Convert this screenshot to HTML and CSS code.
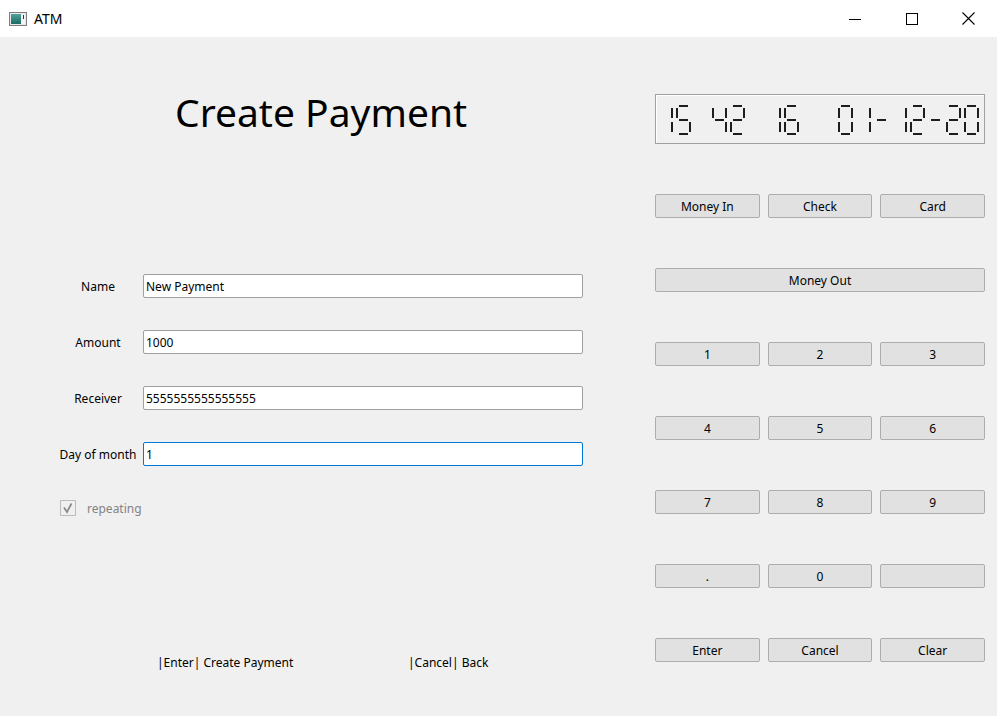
FILE: index.html
```html
<!DOCTYPE html>
<html lang="en">
<head>
<meta charset="utf-8">
<title>ATM</title>
<link rel="stylesheet" href="styles.css">
</head>
<body>
<div class="window">
  <div class="titlebar">
    <svg class="app-icon" viewBox="0 0 18 14" width="18" height="14">
      <defs>
        <linearGradient id="ig" x1="0" y1="0" x2="0" y2="1">
          <stop offset="0" stop-color="#4fa39a"/>
          <stop offset="1" stop-color="#1d6b63"/>
        </linearGradient>
      </defs>
      <rect x="0.5" y="0.5" width="17" height="13" fill="#e8e8e8" stroke="#7d7d7d"/>
      <rect x="2" y="2" width="10" height="10" fill="url(#ig)"/>
      <rect x="12" y="2" width="4" height="10" fill="#f4f4f4"/>
      <rect x="14" y="3" width="1" height="4" fill="#333"/>
    </svg>
    <span class="title">ATM</span>
    <div class="controls">
      <div class="ctl"><svg width="12" height="12" viewBox="0 0 12 12"><path d="M0 6.5H12" stroke="#000" stroke-width="1"/></svg></div>
      <div class="ctl"><svg width="12" height="12" viewBox="0 0 12 12"><rect x="0.5" y="0.5" width="11" height="11" fill="none" stroke="#000" stroke-width="1"/></svg></div>
      <div class="ctl"><svg width="13" height="13" viewBox="0 0 13 13"><path d="M0.5 0.5L12.5 12.5M12.5 0.5L0.5 12.5" stroke="#000" stroke-width="1.1"/></svg></div>
    </div>
  </div>

  <div class="client">
    <div class="left">
      <h1 class="heading">Create Payment</h1>

      <div class="form">
        <div class="row"><span class="lbl">Name</span><div class="input">New Payment</div></div>
        <div class="row"><span class="lbl">Amount</span><div class="input">1000</div></div>
        <div class="row"><span class="lbl">Receiver</span><div class="input">5555555555555555</div></div>
        <div class="row"><span class="lbl">Day of month</span><div class="input focus">1</div></div>
      </div>

      <div class="check-row">
        <span class="checkbox">
          <svg width="14" height="14" viewBox="0 0 14 14"><path d="M3 6.5L6 11L10.5 2.5" fill="none" stroke="#8a8a8a" stroke-width="1.8"/></svg>
        </span>
        <span class="check-label">repeating</span>
      </div>

      <div class="footer">
        <span class="hint hint-enter">|Enter| Create Payment</span>
        <span class="hint">|Cancel| Back</span>
      </div>
    </div>

    <div class="right">
      <div class="lcd" role="img" aria-label="15 42 16  01-12-20">
        <div class="cell"><div class="digit"><i class="seg b"></i><i class="seg c"></i></div></div>
        <div class="cell"><div class="digit"><i class="seg a"></i><i class="seg f"></i><i class="seg g"></i><i class="seg c"></i><i class="seg d"></i></div></div>
        <div class="cell"></div>
        <div class="cell"><div class="digit"><i class="seg f"></i><i class="seg g"></i><i class="seg b"></i><i class="seg c"></i></div></div>
        <div class="cell"><div class="digit"><i class="seg a"></i><i class="seg b"></i><i class="seg g"></i><i class="seg e"></i><i class="seg d"></i></div></div>
        <div class="cell"></div>
        <div class="cell"><div class="digit"><i class="seg b"></i><i class="seg c"></i></div></div>
        <div class="cell"><div class="digit"><i class="seg a"></i><i class="seg f"></i><i class="seg g"></i><i class="seg e"></i><i class="seg c"></i><i class="seg d"></i></div></div>
        <div class="cell"></div>
        <div class="cell"></div>
        <div class="cell"><div class="digit"><i class="seg a"></i><i class="seg b"></i><i class="seg c"></i><i class="seg d"></i><i class="seg e"></i><i class="seg f"></i></div></div>
        <div class="cell"><div class="digit"><i class="seg b"></i><i class="seg c"></i></div></div>
        <div class="cell"><div class="digit"><i class="seg g"></i></div></div>
        <div class="cell"><div class="digit"><i class="seg b"></i><i class="seg c"></i></div></div>
        <div class="cell"><div class="digit"><i class="seg a"></i><i class="seg b"></i><i class="seg g"></i><i class="seg e"></i><i class="seg d"></i></div></div>
        <div class="cell"><div class="digit"><i class="seg g"></i></div></div>
        <div class="cell"><div class="digit"><i class="seg a"></i><i class="seg b"></i><i class="seg g"></i><i class="seg e"></i><i class="seg d"></i></div></div>
        <div class="cell"><div class="digit"><i class="seg a"></i><i class="seg b"></i><i class="seg c"></i><i class="seg d"></i><i class="seg e"></i><i class="seg f"></i></div></div>
      </div>

      <div class="keypad">
        <div class="btn">Money In</div>
        <div class="btn">Check</div>
        <div class="btn">Card</div>
        <div class="btn wide">Money Out</div>
        <div class="btn">1</div>
        <div class="btn">2</div>
        <div class="btn">3</div>
        <div class="btn">4</div>
        <div class="btn">5</div>
        <div class="btn">6</div>
        <div class="btn">7</div>
        <div class="btn">8</div>
        <div class="btn">9</div>
        <div class="btn">.</div>
        <div class="btn">0</div>
        <div class="btn"></div>
        <div class="btn">Enter</div>
        <div class="btn">Cancel</div>
        <div class="btn">Clear</div>
      </div>
    </div>
  </div>
</div>
</body>
</html>
```

FILE: styles.css
```css
html, body {
  margin: 0;
  padding: 0;
}

body {
  font-family: "Noto Sans", "Open Sans", sans-serif;
  font-size: 12px;
  color: #000;
  background: #f0f0f0;
}

.window {
  width: 997px;
  height: 716px;
  display: flex;
  flex-direction: column;
  overflow: hidden;
  background: #f0f0f0;
}

/* ---------- title bar ---------- */
.titlebar {
  height: 37px;
  flex: none;
  background: #fff;
  display: flex;
  align-items: center;
}

.app-icon {
  margin-left: 9px;
  display: block;
}

.title {
  margin-left: 7px;
  font-size: 14px;
  line-height: 18px;
}

.controls {
  margin-left: auto;
  display: flex;
  height: 100%;
}

.ctl {
  width: 57px;
  height: 100%;
  display: flex;
  align-items: center;
  justify-content: center;
}

.ctl svg {
  display: block;
}

/* ---------- client area ---------- */
.client {
  flex: 1;
  display: flex;
}

.left {
  width: 655px;
  padding-top: 48px;
  display: flex;
  flex-direction: column;
}

.heading {
  margin: 0 0 0 175px;
  font-size: 39px;
  font-weight: normal;
  line-height: 54px;
  height: 54px;
}

.form {
  margin-top: 135px;
  display: flex;
  flex-direction: column;
  gap: 32px;
}

.row {
  display: flex;
  align-items: center;
  height: 24px;
}

.lbl {
  width: 90px;
  margin-left: 53px;
  text-align: center;
  white-space: nowrap;
  line-height: 24px;
  padding-top: 1px;
}

.input {
  width: 440px;
  height: 24px;
  box-sizing: border-box;
  border: 1px solid #a0a0a0;
  border-radius: 2px;
  background: #fff;
  padding: 1px 0 0 2px;
  line-height: 21px;
}

.input.focus {
  border-color: #0078d7;
}

.check-row {
  margin-top: 34px;
  margin-left: 60px;
  display: flex;
  align-items: center;
  height: 16px;
}

.checkbox {
  width: 16px;
  height: 16px;
  box-sizing: border-box;
  border: 1px solid #bcbcbc;
  background: #f0f0f0;
  display: flex;
  align-items: center;
  justify-content: center;
}

.checkbox svg {
  display: block;
}

.check-label {
  margin-left: 11px;
  color: #838383;
}

.footer {
  margin-top: 139px;
  display: flex;
  height: 16px;
  line-height: 16px;
}

.hint {
  white-space: nowrap;
}

.hint-enter {
  margin-left: 157px;
  width: 251px;
}

/* ---------- right panel ---------- */
.right {
  width: 330px;
  padding-top: 57px;
  display: flex;
  flex-direction: column;
}

.lcd {
  height: 50px;
  box-sizing: border-box;
  border: 1px solid #a0a0a0;
  box-shadow: inset 1px 1px 0 #fff;
  display: flex;
  padding: 10px 0 0 1px;
}

.cell {
  width: 18px;
  height: 30px;
  position: relative;
  flex: none;
}

.digit {
  position: absolute;
  left: 1px;
  top: 0;
  width: 15px;
  height: 30px;
}

.seg {
  position: absolute;
  display: block;
  background: #1e1e1e;
}

.seg.a, .seg.d, .seg.g {
  left: 3px;
  width: 9px;
  height: 2px;
}

.seg.a { top: 0; }
.seg.g { top: 14px; }
.seg.d { top: 28px; }

.seg.b, .seg.c, .seg.e, .seg.f {
  width: 2px;
  height: 10px;
}

.seg.f { left: 0; top: 3px; }
.seg.b { right: 0; top: 3px; }
.seg.e { left: 0; top: 17px; }
.seg.c { right: 0; top: 17px; }

.keypad {
  margin-top: 50px;
  display: grid;
  grid-template-columns: repeat(3, 1fr);
  column-gap: 8px;
  row-gap: 50px;
}

.btn {
  height: 24px;
  box-sizing: border-box;
  border: 1px solid #adadad;
  border-radius: 2px;
  background: #e1e1e1;
  display: flex;
  align-items: center;
  justify-content: center;
  white-space: nowrap;
}

.btn.wide {
  grid-column: 1 / 4;
}
```
